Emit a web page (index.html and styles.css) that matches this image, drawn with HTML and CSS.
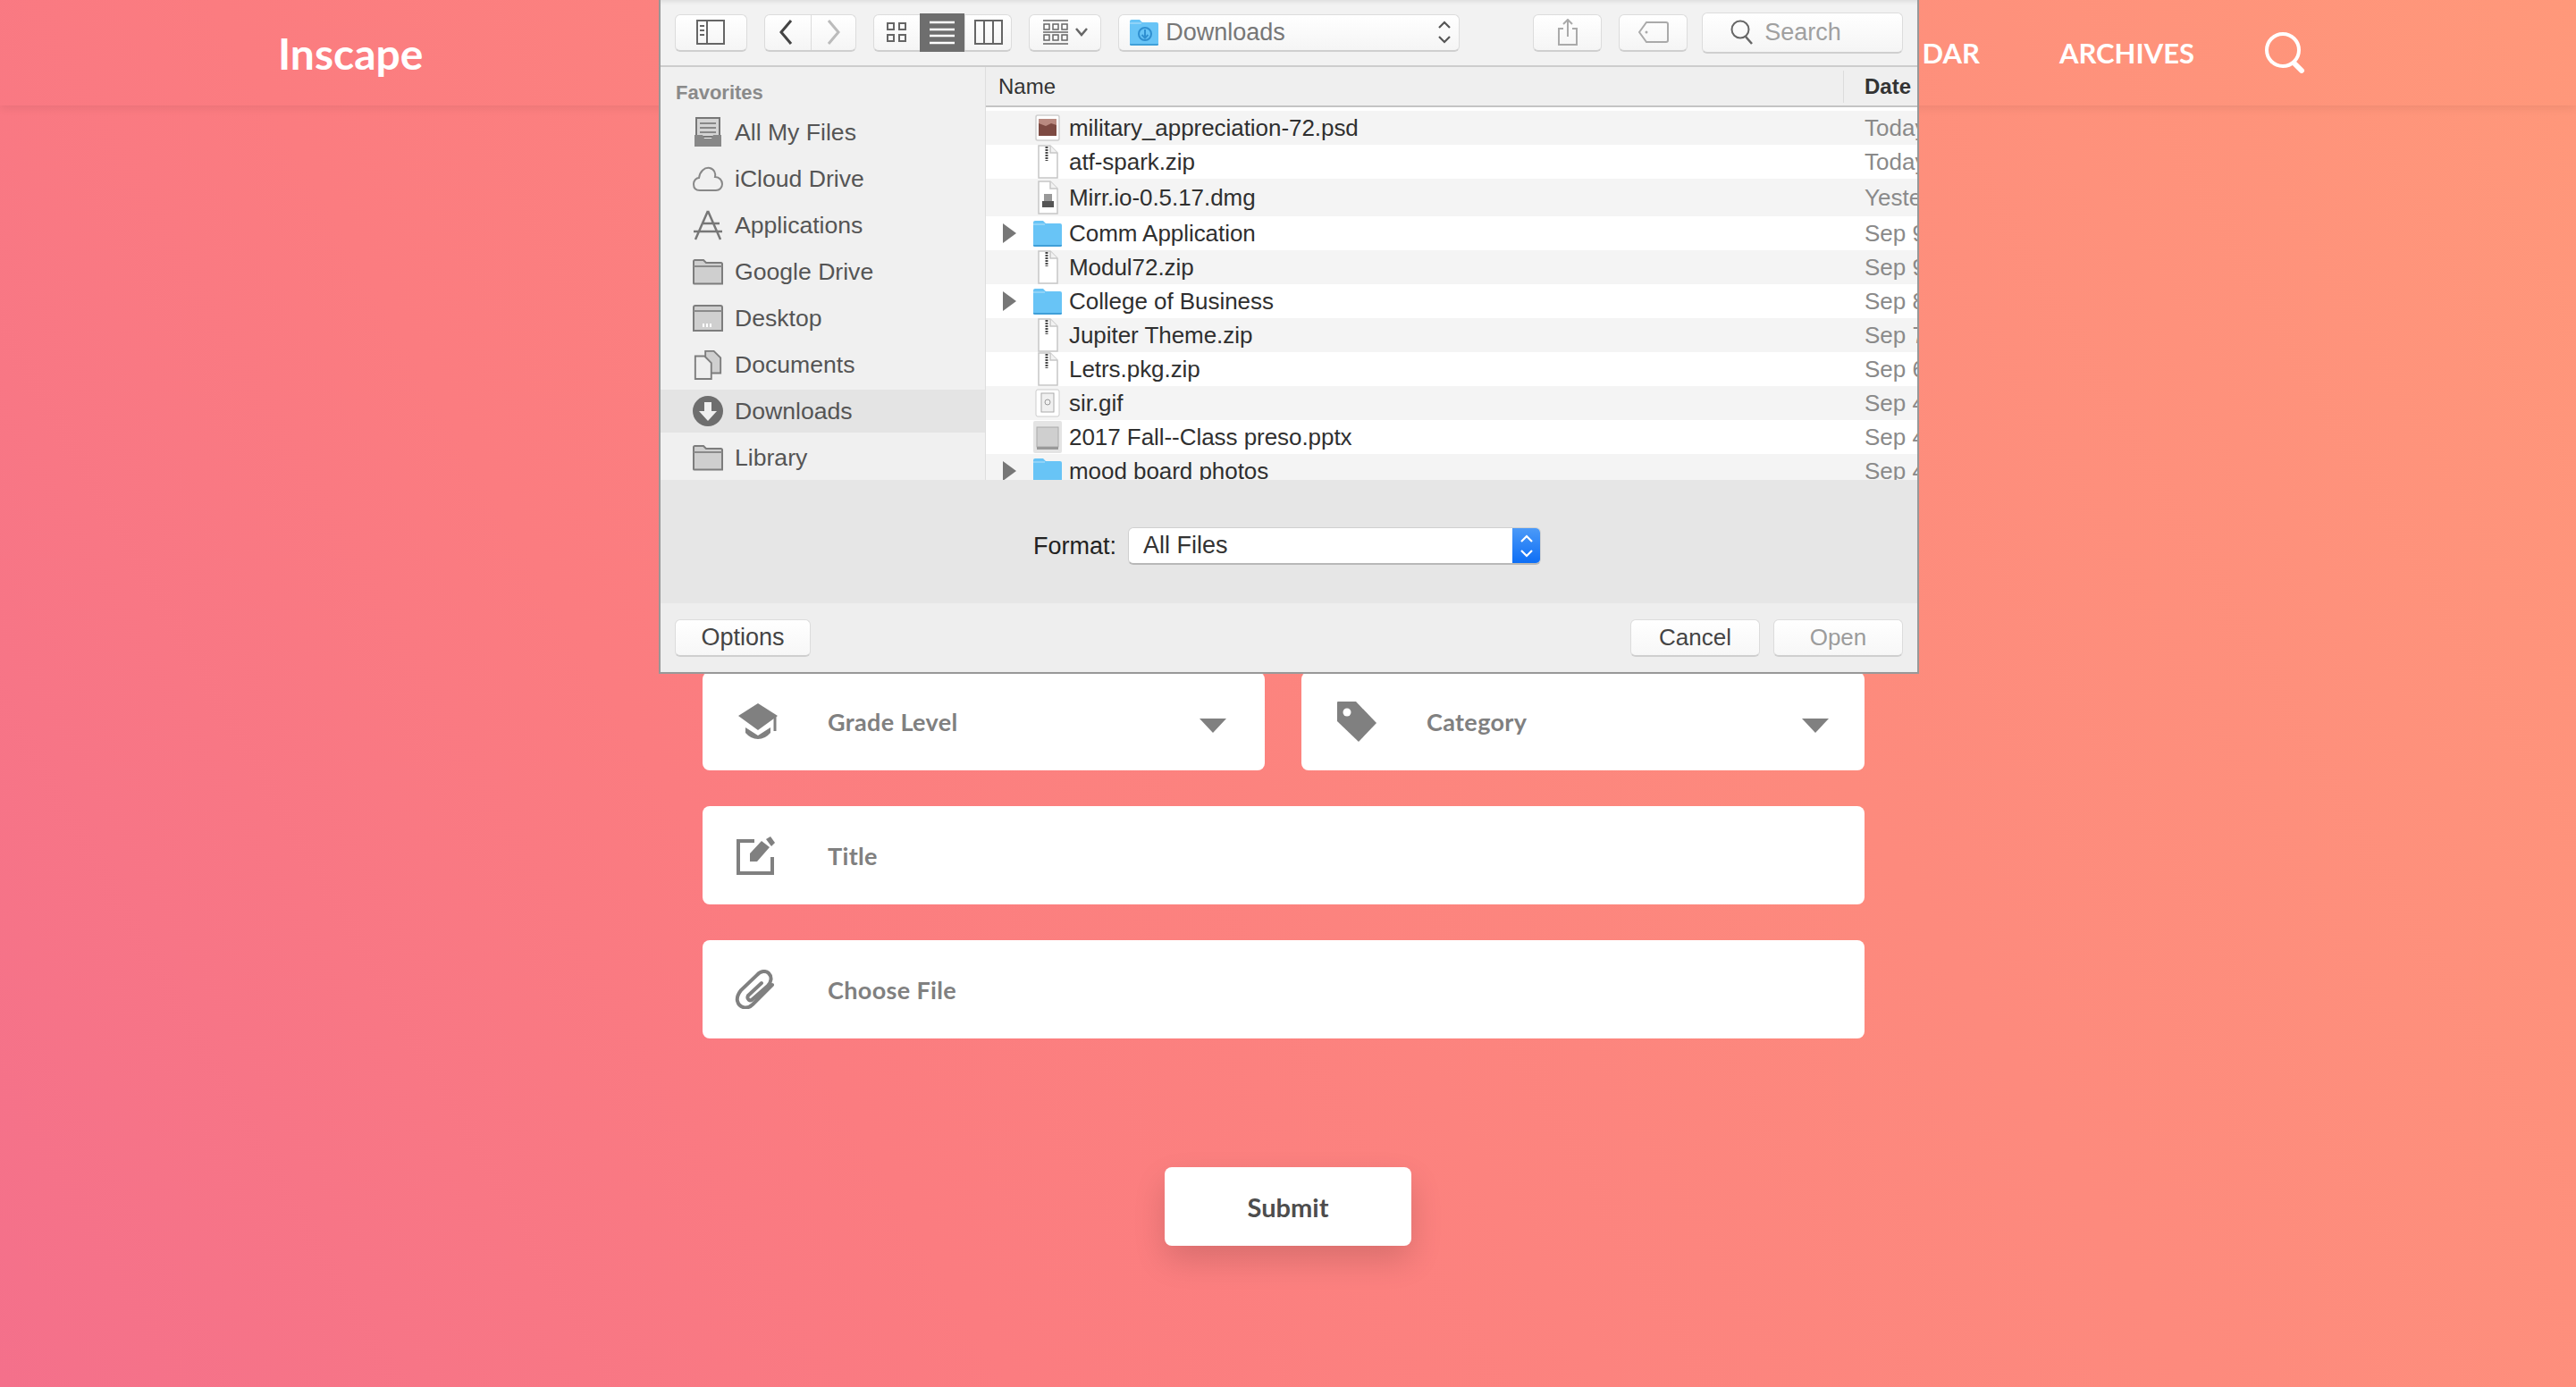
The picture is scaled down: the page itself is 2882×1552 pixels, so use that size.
FILE: index.html
```html
<!DOCTYPE html>
<html lang="en">
<head>
<meta charset="utf-8">
<title>Inscape</title>
<link rel="stylesheet" href="styles.css">
</head>
<body>
<svg class="defs" width="0" height="0" aria-hidden="true">
  <symbol id="folder-gray" viewBox="0 0 34 30"><path d="M1 28V3.500Q1 2 2.500 2H12l3 3h16.500Q33 5 33 6.500V28.500H2Q1 28.500 1 28Z" fill="#cfcfcf" stroke="#7d7d7d" stroke-width="2"/><path d="M1 9H33" stroke="#8a8a8a" stroke-width="2"/></symbol>
  <symbol id="folder-blue" viewBox="0 0 32 30"><path d="M0 3Q0 1 2 1H11L14 4H30Q32 4 32 6V28Q32 30 30 30H2Q0 30 0 28Z" fill="#68c4f6"/><path d="M0 28H32V28.500Q32 30 30 30H2Q0 30 0 28.500Z" fill="#3f9fd8"/><path d="M0 5H13" stroke="#8fd3f8" stroke-width="2"/></symbol>
  <symbol id="zip" viewBox="0 0 24 38"><path d="M2 1H15L23 9V37H2Z" fill="#fff" stroke="#c6c6c6" stroke-width="1.500"/><path d="M15 1V9H23" fill="#f2f2f2" stroke="#c6c6c6" stroke-width="1.500"/><path d="M11 2V18" stroke="#4a4a4a" stroke-width="3" stroke-dasharray="2 1"/></symbol>
  <symbol id="tri" viewBox="0 0 15 22"><path d="M0 0L15 11L0 22Z" fill="#777"/></symbol>
</svg>

<header class="site-header">
  <a class="logo">Inscape</a>
  <nav class="site-nav">
    <a class="nav-link">CALEN<span class="nav-tail">DAR</span></a>
    <a class="nav-link">ARCHIVES</a>
    <svg class="nav-search" viewBox="0 0 46 46"><circle cx="20" cy="20" r="18" fill="none" stroke="#fff" stroke-width="4"/><path d="M33 35L41 43" stroke="#fff" stroke-width="6" stroke-linecap="round"/></svg>
  </nav>
</header>

<main class="page">
  <form class="upload-form">
    <div class="form-row">
      <div class="field field-grade">
        <svg class="field-icon" width="44" height="40" viewBox="0 0 44 40"><path d="M22 0L44 14L22 30L0 14Z" fill="#808080"/><path d="M8 27L22 36L36 27V33Q30 40 22 40Q14 40 8 33Z" fill="#808080"/><path d="M41 14V31" stroke="#808080" stroke-width="3"/></svg>
        <span class="field-label">Grade Level</span>
        <span class="caret"></span>
      </div>
      <div class="field">
        <svg class="field-icon" width="44" height="45" viewBox="0 0 44 45"><path d="M0 1Q0 0 1 0H21L44 24L24 45L0 22Z" fill="#808080"/><circle cx="11" cy="12" r="4.500" fill="#fff"/></svg>
        <span class="field-label">Category</span>
        <span class="caret"></span>
      </div>
    </div>
    <div class="field">
      <svg class="field-icon icon-title" width="44" height="43" viewBox="0 0 44 43"><path d="M20 5H2V41H40V23" fill="none" stroke="#808080" stroke-width="4"/><path d="M15 19L28 5L37 12L23 28H15Z" fill="#808080"/><path d="M33 3L38 0L43 7L39 11Z" fill="#808080"/></svg>
      <span class="field-label">Title</span>
    </div>
    <div class="field">
      <svg class="field-icon icon-clip" width="44" height="44" viewBox="0 0 44 44"><path d="M42 17L20 39C14 45 5 43 3 35C2 31 4 27 7 23L25 6C29 1 35 1 38 4C42 8 41 14 37 18L20 33C17 36 13 33 15 29L30 15" fill="none" stroke="#808080" stroke-width="4" stroke-linecap="round"/></svg>
      <span class="field-label">Choose File</span>
    </div>
  </form>
  <button class="submit" type="button">Submit</button>
</main>

<section class="dialog">
  <div class="toolbar">
    <div class="tbtn w-side">
      <svg width="32" height="28" viewBox="0 0 32 28"><rect x="1" y="1" width="30" height="26" fill="none" stroke="#666" stroke-width="2"/><path d="M12 1V27M4 7H9M4 12H9M4 17H9" stroke="#666" stroke-width="2"/></svg>
    </div>
    <div class="tgroup w-nav">
      <div class="tseg tseg-back"><svg width="16" height="30" viewBox="0 0 16 30"><path d="M14 2L3 15L14 28" fill="none" stroke="#444" stroke-width="3"/></svg></div>
      <div class="tseg tseg-fwd"><svg width="16" height="30" viewBox="0 0 16 30"><path d="M2 2L13 15L2 28" fill="none" stroke="#bbb" stroke-width="3"/></svg></div>
    </div>
    <div class="tgroup w-view">
      <div class="tseg"><svg width="22" height="24" viewBox="0 0 22 24"><g fill="none" stroke="#666" stroke-width="2"><rect x="1" y="2" width="7" height="7"/><rect x="14" y="2" width="7" height="7"/><rect x="1" y="15" width="7" height="7"/><rect x="14" y="15" width="7" height="7"/></g></svg></div>
      <div class="tseg tseg-on"><svg width="28" height="28" viewBox="0 0 28 28"><path d="M0 3H28M0 11H28M0 18H28M0 26H28" stroke="#fff" stroke-width="2.500"/></svg></div>
      <div class="tseg"><svg width="32" height="28" viewBox="0 0 32 28"><path d="M1 1H31V27H1ZM11 1V27M21 1V27" fill="none" stroke="#666" stroke-width="2"/></svg></div>
    </div>
    <div class="tbtn w-arrange">
      <svg width="30" height="28" viewBox="0 0 30 28"><g fill="none" stroke="#666" stroke-width="1.500"><path d="M0 1H28M0 27H28M0 14H28"/><rect x="1" y="5" width="6" height="6"/><rect x="11" y="5" width="6" height="6"/><rect x="21" y="5" width="6" height="6"/><rect x="1" y="17" width="6" height="6"/><rect x="11" y="17" width="6" height="6"/><rect x="21" y="17" width="6" height="6"/></g></svg>
      <svg width="14" height="10" viewBox="0 0 14 10"><path d="M1 1L7 8L13 1" fill="none" stroke="#666" stroke-width="2.500"/></svg>
    </div>
    <div class="tbtn w-path">
      <svg width="32" height="30" viewBox="0 0 32 30"><use href="#folder-blue"/><circle cx="17" cy="17" r="7" fill="none" stroke="#2f8fd0" stroke-width="2"/><path d="M17 12V21M13.500 18L17 21.500L20.500 18" fill="none" stroke="#2f8fd0" stroke-width="2"/></svg>
      <span class="path-name">Downloads</span>
      <svg class="updown" width="14" height="26" viewBox="0 0 14 26"><path d="M1 8L7 2L13 8M1 18L7 24L13 18" fill="none" stroke="#555" stroke-width="2.200"/></svg>
    </div>
    <div class="tbtn w-share">
      <svg width="24" height="30" viewBox="0 0 24 30"><path d="M7 11H2V29H22V11H17M12 20V1M7 6L12 1L17 6" fill="none" stroke="#aaa" stroke-width="2"/></svg>
    </div>
    <div class="tbtn w-tag">
      <svg width="34" height="24" viewBox="0 0 34 24"><path d="M9 1H31Q33 1 33 3V21Q33 23 31 23H9L1 12Z" fill="none" stroke="#aaa" stroke-width="2"/><circle cx="9" cy="12" r="1.500" fill="#aaa"/></svg>
    </div>
    <div class="tbtn w-search">
      <svg width="26" height="28" viewBox="0 0 26 28"><circle cx="11" cy="11" r="9.500" fill="none" stroke="#666" stroke-width="2"/><path d="M17 19L24 27" stroke="#666" stroke-width="2.500"/></svg>
      <span class="search-word">Search</span>
    </div>
  </div>

  <div class="browser">
    <aside class="sidebar">
      <div class="side-title">Favorites</div>
      <div class="side-item">
        <svg class="side-icon" viewBox="0 0 34 34"><path d="M4 1H30V22H4Z" fill="#d4d4d4" stroke="#777" stroke-width="2"/><path d="M8 7H26M8 12H26M8 17H26" stroke="#888" stroke-width="2"/><path d="M2 20H11L13 24H21L23 20H32V33H2Z" fill="#888"/></svg>
        All My Files
      </div>
      <div class="side-item">
        <svg class="side-icon" viewBox="0 0 34 30"><path d="M8 28C3 28 1 25 1 21C1 17 4 14 7 14C8 7 13 2 19 3C24 4 26 9 25 13C30 13 33 17 33 21C33 25 30 28 26 28Z" fill="none" stroke="#888" stroke-width="2"/></svg>
        iCloud Drive
      </div>
      <div class="side-item">
        <svg class="side-icon" viewBox="0 0 34 34"><path d="M17 1L31 33M17 1L3 33M10 15H30M1 24H33" fill="none" stroke="#777" stroke-width="2.500"/></svg>
        Applications
      </div>
      <div class="side-item"><svg class="side-icon" viewBox="0 0 34 30"><use href="#folder-gray"/></svg>Google Drive</div>
      <div class="side-item">
        <svg class="side-icon" viewBox="0 0 34 30"><path d="M1 3Q1 1 3 1H31Q33 1 33 3V29H1Z" fill="#cfcfcf" stroke="#7d7d7d" stroke-width="2"/><path d="M1 7H33" stroke="#8a8a8a" stroke-width="2"/><path d="M11 23H23" stroke="#fff" stroke-width="4" stroke-dasharray="2 2"/></svg>
        Desktop
      </div>
      <div class="side-item">
        <svg class="side-icon" viewBox="0 0 34 36"><path d="M14 2H24L32 10V28H14Z" fill="#cfcfcf" stroke="#7d7d7d" stroke-width="2"/><path d="M2 8H13L21 16V35H2Z" fill="#eee" stroke="#7d7d7d" stroke-width="2"/></svg>
        Documents
      </div>
      <div class="side-item side-on">
        <svg class="side-icon" viewBox="0 0 34 34"><circle cx="17" cy="17" r="17" fill="#6e6e6e"/><path d="M13 7H21V17H27L17 28L7 17H13Z" fill="#f0f0f0"/></svg>
        Downloads
      </div>
      <div class="side-item"><svg class="side-icon" viewBox="0 0 34 30"><use href="#folder-gray"/></svg>Library</div>
    </aside>

    <div class="files">
      <div class="col-head">
        <span class="col-name">Name</span>
        <span class="col-date">Date Modified</span>
      </div>
      <div class="rows">
        <div class="row row-alt">
          <svg class="f-icon" width="28" height="32" viewBox="0 0 28 32"><rect x="1" y="2" width="26" height="28" rx="2" fill="#fff" stroke="#cfcfcf" stroke-width="1.500"/><rect x="4" y="6" width="20" height="19" fill="#7d4a42"/><path d="M4 6H24V13L18 11L12 14L4 11Z" fill="#b98a80"/></svg>
          <span class="f-name">military_appreciation-72.psd</span><span class="f-date">Today</span>
        </div>
        <div class="row">
          <svg class="f-icon" width="24" height="38" viewBox="0 0 24 38"><use href="#zip"/></svg>
          <span class="f-name">atf-spark.zip</span><span class="f-date">Today</span>
        </div>
        <div class="row row-alt row-tall">
          <svg class="f-icon" width="24" height="38" viewBox="0 0 24 38"><path d="M2 1H15L23 9V37H2Z" fill="#fff" stroke="#c6c6c6" stroke-width="1.500"/><path d="M15 1V9H23" fill="#f2f2f2" stroke="#c6c6c6" stroke-width="1.500"/><rect x="8" y="15" width="9" height="8" fill="#999"/><path d="M6 23H19V30H6Z" fill="#555"/></svg>
          <span class="f-name">Mirr.io-0.5.17.dmg</span><span class="f-date">Yesterday</span>
        </div>
        <div class="row">
          <svg class="tri" width="15" height="22"><use href="#tri"/></svg>
          <svg class="f-icon f-folder" width="32" height="30"><use href="#folder-blue"/></svg>
          <span class="f-name">Comm Application</span><span class="f-date">Sep 9</span>
        </div>
        <div class="row row-alt">
          <svg class="f-icon" width="24" height="38" viewBox="0 0 24 38"><use href="#zip"/></svg>
          <span class="f-name">Modul72.zip</span><span class="f-date">Sep 9</span>
        </div>
        <div class="row">
          <svg class="tri" width="15" height="22"><use href="#tri"/></svg>
          <svg class="f-icon f-folder" width="32" height="30"><use href="#folder-blue"/></svg>
          <span class="f-name">College of Business</span><span class="f-date">Sep 8</span>
        </div>
        <div class="row row-alt">
          <svg class="f-icon" width="24" height="38" viewBox="0 0 24 38"><use href="#zip"/></svg>
          <span class="f-name">Jupiter Theme.zip</span><span class="f-date">Sep 7</span>
        </div>
        <div class="row">
          <svg class="f-icon" width="24" height="38" viewBox="0 0 24 38"><use href="#zip"/></svg>
          <span class="f-name">Letrs.pkg.zip</span><span class="f-date">Sep 6</span>
        </div>
        <div class="row row-alt">
          <svg class="f-icon" width="28" height="32" viewBox="0 0 28 32"><rect x="1" y="1" width="26" height="30" rx="2" fill="#fff" stroke="#ccc"/><rect x="7" y="5" width="14" height="21" fill="#f0f0f0" stroke="#aaa"/><circle cx="14" cy="15" r="3" fill="none" stroke="#999"/></svg>
          <span class="f-name">sir.gif</span><span class="f-date">Sep 4</span>
        </div>
        <div class="row">
          <svg class="f-icon f-folder" width="32" height="36" viewBox="0 0 32 36"><rect width="32" height="36" rx="2" fill="#e4e4e4"/><rect x="4" y="7" width="24" height="22" fill="#cfcfcf" stroke="#aaa"/><rect x="4" y="29" width="24" height="3" fill="#999"/></svg>
          <span class="f-name">2017 Fall--Class preso.pptx</span><span class="f-date">Sep 4</span>
        </div>
        <div class="row row-alt">
          <svg class="tri" width="15" height="22"><use href="#tri"/></svg>
          <svg class="f-icon f-folder" width="32" height="30"><use href="#folder-blue"/></svg>
          <span class="f-name">mood board photos</span><span class="f-date">Sep 4</span>
        </div>
      </div>
    </div>
  </div>

  <div class="accessory">
    <span class="format-label">Format:</span>
    <div class="format-select">
      <span class="format-value">All Files</span>
      <span class="format-arrows"><svg width="14" height="26" viewBox="0 0 14 26"><path d="M1 8L7 2L13 8M1 18L7 24L13 18" fill="none" stroke="#fff" stroke-width="2.200"/></svg></span>
    </div>
  </div>

  <div class="dialog-footer">
    <div class="fbtn fbtn-options">Options</div>
    <div class="fbtn fbtn-cancel">Cancel</div>
    <div class="fbtn fbtn-open">Open</div>
  </div>
</section>
</body>
</html>
```
FILE: styles.css
```css
* { box-sizing: border-box; }
html, body { margin: 0; height: 100%; }
body {
  position: relative;
  height: 1552px;
  overflow: hidden;
  background: linear-gradient(60deg, #f4708b 0%, #fb7c80 30%, #ff987a 100%);
  font-family: "Lato", "Noto Sans", sans-serif;
}
.defs { position: absolute; }

/* site header */
.site-header {
  display: flex;
  align-items: center;
  height: 118px;
  padding: 0 302px 0 311px;
  box-shadow: 0 3px 10px rgba(0, 0, 0, 0.07);
}
.logo { font-size: 48px; font-weight: 700; color: #fff; }
.site-nav { display: flex; align-items: center; margin-left: auto; }
.nav-link { font-size: 31px; font-weight: 700; color: #fff; margin-right: 89px; }
.nav-link:last-of-type { margin-right: 79px; }
.nav-tail { margin-left: 5px; }
.nav-search { width: 46px; height: 46px; }

/* form */
.page { display: flex; flex-direction: column; align-items: center; }
.upload-form {
  display: flex;
  flex-direction: column;
  gap: 40px;
  width: 1300px;
  margin: 634px 10px 0 0;
}
.form-row { display: grid; grid-template-columns: 629px 630px; gap: 41px; }
.field {
  display: flex;
  align-items: center;
  height: 110px;
  padding: 0 40px;
  background: #fff;
  border-radius: 8px;
}
.field-grade { padding-right: 43px; }
.field-icon { flex: none; margin-right: 56px; }
.icon-title { margin-left: -2px; margin-right: 58px; }
.icon-clip { margin-left: -4px; margin-right: 60px; }
.field-label { font-size: 27px; font-weight: 700; letter-spacing: 0.35px; color: #808080; }
.caret {
  margin: 10px 0 0 auto;
  border-top: 16px solid #808080;
  border-left: 15px solid transparent;
  border-right: 15px solid transparent;
}
.submit {
  width: 276px;
  height: 88px;
  margin: 144px 0 0;
  border: 0;
  border-radius: 8px;
  background: #fff;
  color: #4d4d4d;
  font: 700 29px "Lato", sans-serif;
  box-shadow: 0 16px 36px rgba(0, 0, 0, 0.14);
}

/* dialog */
.dialog {
  position: absolute;
  top: 0;
  left: 737px;
  width: 1410px;
  height: 754px;
  display: flex;
  flex-direction: column;
  overflow: hidden;
  border: 2px solid #989898;
  border-top: 0;
  background: #eee;
  font-family: "Liberation Sans", Arial, sans-serif;
  font-size: 26px;
}
.toolbar {
  display: flex;
  align-items: center;
  flex: none;
  gap: 19px;
  height: 75px;
  padding: 0 16px;
  background: #f2f2f2;
  border-bottom: 2px solid #cdcdcd;
  box-shadow: inset 0 5px 4px -3px #ddd;
}
.tbtn, .tgroup {
  display: flex;
  align-items: center;
  height: 42px;
  background: linear-gradient(#fff, #f5f5f5);
  border: 1px solid #dcdcdc;
  border-bottom: 2px solid #cfcfcf;
  border-radius: 6px;
}
.tbtn { justify-content: center; gap: 6px; }
.w-side { width: 81px; }
.w-nav { width: 103px; }
.w-view { width: 156px; }
.w-arrange { width: 81px; }
.w-path { width: 382px; padding: 0 9px 0 12px; justify-content: flex-start; margin-right: 63px; font-size: 27px; }
.w-share { width: 78px; }
.w-tag { width: 77px; margin-right: -3px; }
.w-search { width: 225px; height: 46px; gap: 12px; padding-left: 31px; justify-content: flex-start; font-size: 27px; }
.tseg {
  flex: 1;
  display: flex;
  align-items: center;
  justify-content: center;
  align-self: stretch;
  border-left: 1px solid #dcdcdc;
}
.tseg:first-child { border-left: 0; }
.tseg-back { padding-right: 4px; }
.tseg-fwd { padding-left: 2px; }
.tseg-on {
  background: #6e6e6e;
  border: 0;
  margin: -2px 0;
}
.path-name { margin-left: 2px; color: #777; }
.updown { margin-left: auto; }
.search-word { color: #a0a0a0; }

.browser { display: flex; flex: none; height: 462px; overflow: hidden; }
.sidebar {
  flex: none;
  width: 364px;
  padding-top: 17px;
  background: #f0f0f0;
  border-right: 1px solid #dedede;
  color: #555;
  font-size: 26.600px;
}
.side-title {
  height: 24px;
  margin: 0 0 6px 17px;
  font-size: 22px;
  line-height: 24px;
  font-weight: 700;
  color: #8a8a8a;
}
.side-item {
  display: flex;
  align-items: center;
  gap: 13px;
  height: 52px;
  padding-left: 36px;
}
.side-icon { flex: none; width: 34px; height: 34px; }
.side-on { background: linear-gradient(#f0f0f0 2px, #e4e4e4 2px, #e4e4e4 50px, #f0f0f0 50px); }

.files { flex: 1; min-width: 0; background: #fff; }
.col-head {
  display: flex;
  align-items: center;
  height: 45px;
  padding-left: 14px;
  background: #efefef;
  border-bottom: 2px solid #c4c4c4;
  font-size: 24px;
  color: #333;
}
.col-name { flex: 1; }
.col-date {
  width: 83px;
  height: 36px;
  padding-left: 23px;
  line-height: 36px;
  white-space: nowrap;
  font-weight: 700;
  border-left: 1px solid #dcdcdc;
}
.rows { padding-top: 4px; }
.row {
  position: relative;
  display: flex;
  align-items: center;
  height: 38px;
  padding-left: 55px;
  color: #2f2f2f;
  white-space: nowrap;
}
.row-alt { background: #f4f4f4; }
.row-tall { height: 42px; }
.tri { position: absolute; left: 19px; top: 8px; }
.f-icon { flex: none; width: 28px; margin-right: 10px; }
.f-folder { width: 32px; margin-left: -2px; margin-right: 8px; }
.f-name { flex: 1; letter-spacing: -0.05px; }
.f-date { width: 59px; color: #8a8a8a; overflow: hidden; }

.accessory {
  display: flex;
  align-items: center;
  flex: none;
  height: 138px;
  padding: 10px 0 0 417px;
  background: #e6e6e6;
  color: #222;
  font-size: 27px;
}
.format-label { margin-right: 13px; }
.format-select {
  display: flex;
  align-items: center;
  width: 462px;
  height: 42px;
  background: #fff;
  border: 1px solid #d0d0d0;
  border-bottom: 2px solid #b8b8b8;
  border-radius: 6px;
  overflow: hidden;
}
.format-value { flex: 1; padding-left: 16px; color: #333; }
.format-arrows {
  display: flex;
  align-items: center;
  justify-content: center;
  align-self: stretch;
  width: 32px;
  margin: -1px -1px -2px 0;
  background: linear-gradient(#4d9bf8, #0a6cf5);
}

.dialog-footer {
  display: flex;
  align-items: center;
  flex: 1;
  gap: 15px;
  padding: 0 16px;
  background: #eee;
}
.fbtn {
  display: flex;
  align-items: center;
  justify-content: center;
  width: 145px;
  height: 42px;
  background: linear-gradient(#fff, #f7f7f7);
  border: 1px solid #dcdcdc;
  border-bottom: 2px solid #cfcfcf;
  border-radius: 6px;
  color: #444;
}
.fbtn-options { width: 152px; margin-right: auto; font-size: 27px; }
.fbtn-open { color: #9c9c9c; }
```
